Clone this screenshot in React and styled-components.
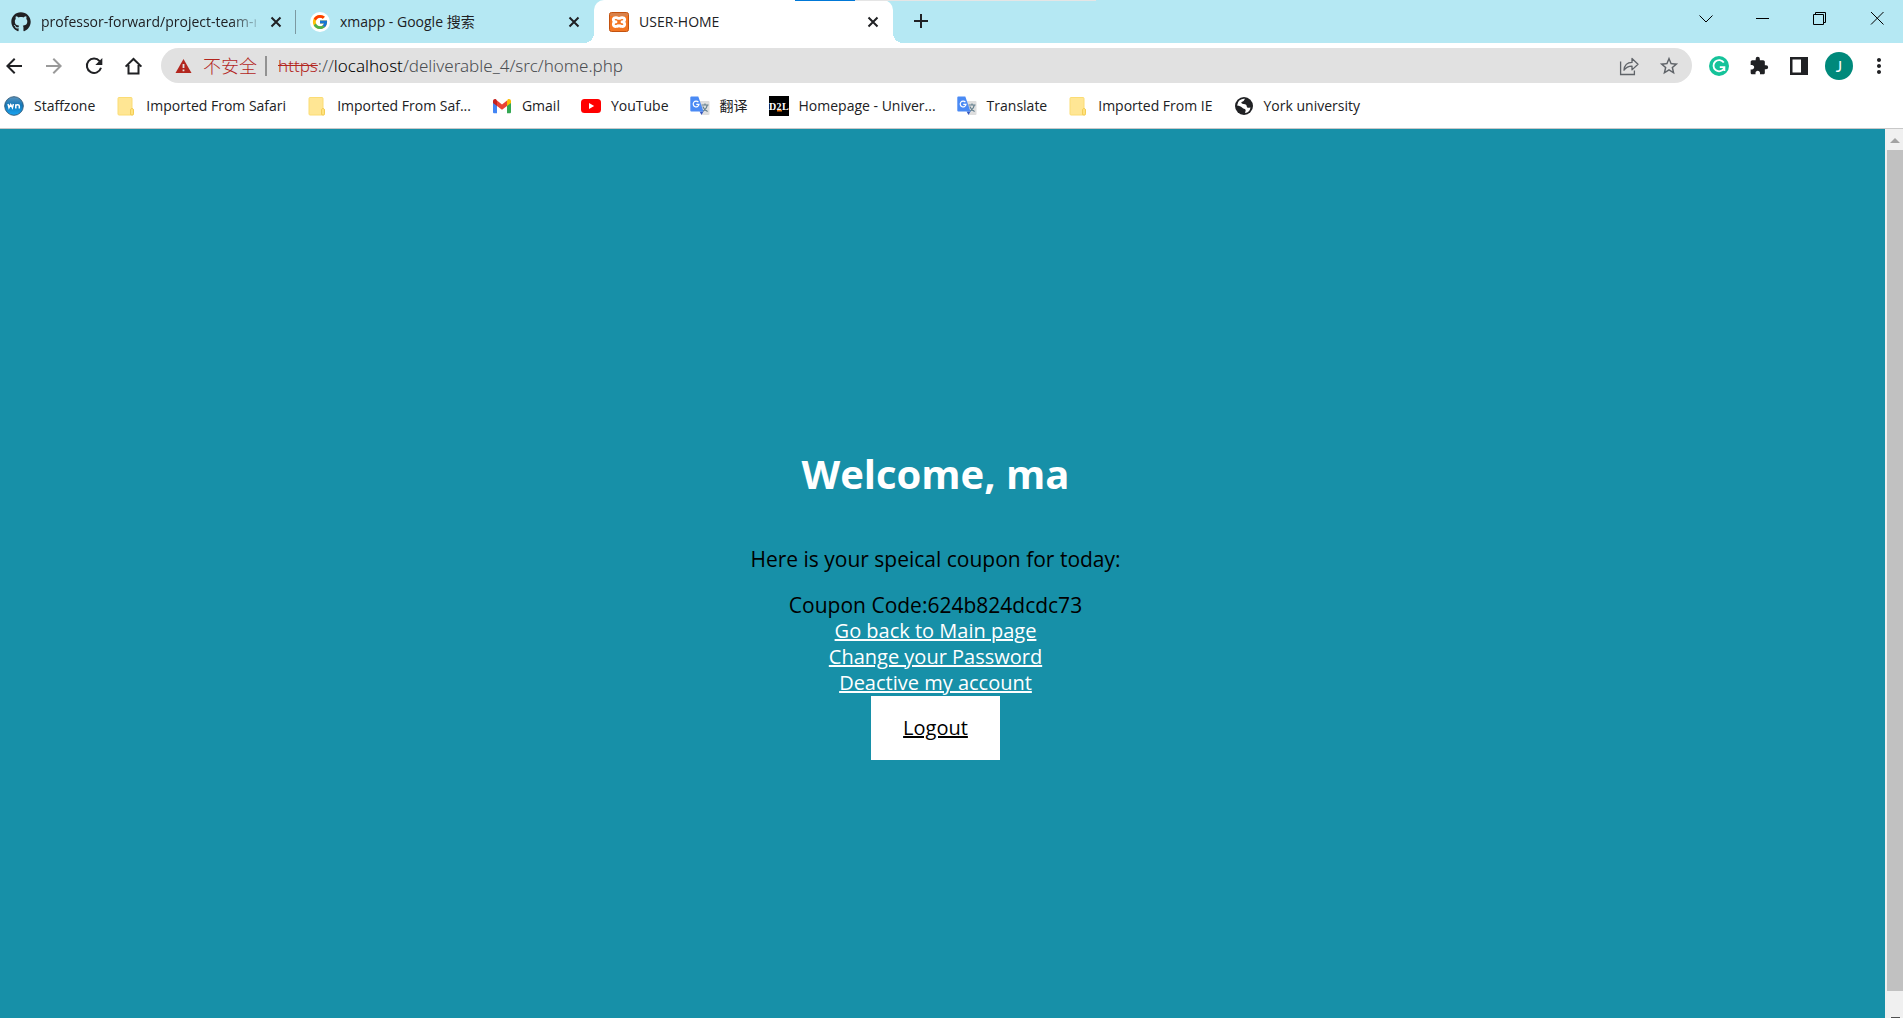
import React from "react";
import styled, { createGlobalStyle, css } from "styled-components";
import { FaGithub } from "react-icons/fa";
import { FcGoogle } from "react-icons/fc";
import { MdExtension, MdArrowBack, MdArrowForward, MdStarBorder, MdMoreVert } from "react-icons/md";

const GlobalStyle = createGlobalStyle`
  * { box-sizing: border-box; }
  body {
    margin: 0;
    font-family: "Open Sans", "Noto Sans CJK SC", sans-serif;
    font-size: 14px;
    line-height: 20px;
    color: #202124;
  }
  svg { display: block; flex: none; }
`;

const Window = styled.div`
  display: flex;
  flex-direction: column;
  height: 100vh;
  overflow: hidden;
  background: #fff;
`;

const TabStrip = styled.header`
  position: relative;
  display: flex;
  height: 43px;
  background: #b5e8f3;
`;

const LoadingBar = styled.div`
  position: absolute;
  top: 0;
  left: 795px;
  width: 301px;
  height: 1px;
  background: linear-gradient(to right, #0078d7 60px, #e5e5e5 60px);
`;

const flare = css`
  content: "";
  position: absolute;
  bottom: 0;
  width: 10px;
  height: 10px;
`;

const Tab = styled.div`
  position: relative;
  display: flex;
  align-items: center;
  gap: 10px;
  width: 299px;
  height: 43px;
  padding: 0 10px 0 15px;
  &:first-child { width: 295px; padding-left: 11px; padding-right: 9px; }
  ${(p) => p.$active && css`
    background: #fff;
    border-radius: 10px 10px 0 0;
    &::before { ${flare} left: -10px; background: radial-gradient(circle at 0 0, transparent 10px, #fff 10px); }
    &::after { ${flare} right: -10px; background: radial-gradient(circle at 100% 0, transparent 10px, #fff 10px); }
  `}
  ${(p) => p.$divider && css`
    &::after {
      content: "";
      position: absolute;
      right: -1px;
      top: 10px;
      width: 1px;
      height: 24px;
      background: #7c99a1;
    }
  `}
`;

const TabTitle = styled.span`
  flex: 1;
  overflow: hidden;
  white-space: nowrap;
  ${(p) => p.$fade && css`mask-image: linear-gradient(to right, #000 190px, transparent 222px);`}
`;

const IconButton = styled.button`
  display: flex;
  align-items: center;
  justify-content: center;
  flex: none;
  width: 20px;
  height: 20px;
  padding: 0;
  border: 0;
  background: none;
  color: ${(p) => p.$color || "#202124"};
`;

const NewTab = styled(IconButton)`
  margin: 11px 0 0 18px;
`;

const WindowControls = styled.div`
  display: flex;
  gap: 37px;
  margin: 8px 16px 0 auto;
`;

const Toolbar = styled.nav`
  display: flex;
  align-items: center;
  gap: 20px;
  height: 45px;
  padding: 0 14px 0 4px;
`;

const AddressBar = styled.div`
  display: flex;
  flex: 1;
  align-items: center;
  height: 35px;
  margin: 0 -3px;
  padding: 0 13px 0 14px;
  border-radius: 18px;
  background: #e1e1e1;
`;

const Warning = styled.span`
  margin: 0 11px 0 11px;
  padding-right: 8px;
  border-right: 2px solid #929292;
  font-size: 18px;
  font-weight: 300;
  color: #b3261e;
`;

const Address = styled.span`
  flex: 1;
  font-family: "Noto Sans", sans-serif;
  font-size: 17px;
  font-weight: 300;
  white-space: nowrap;
  color: #4b4e52;
  s { color: #b3261e; }
  b { font-weight: inherit; color: #000; }
`;

const AddressActions = styled.div`
  display: flex;
  gap: 20px;
`;

const Avatar = styled.button`
  width: 28px;
  height: 28px;
  margin: 0 -4px;
  padding: 0;
  border: 0;
  border-radius: 50%;
  background: #00897b;
  color: #fff;
  font: 400 15px/28px Lato, sans-serif;
`;

const Bookmarks = styled.nav`
  display: flex;
  gap: 21px;
  height: 41px;
  padding: 8px 4px 0;
  border-bottom: 1px solid #c8c8c8;
`;

const Bookmark = styled.a`
  display: flex;
  gap: 10px;
  height: 20px;
  color: #202124;
  text-decoration: none;
  white-space: nowrap;
`;

const Viewport = styled.div`
  display: flex;
  flex: 1;
  min-height: 0;
`;

const Page = styled.main`
  display: flex;
  flex: 1;
  flex-direction: column;
  align-items: center;
  padding: 319px 14px 0 0;
  background: #1790a8;
  font-size: 20px;
  line-height: 26px;
  color: #000;
`;

const Heading = styled.h1`
  margin: 0 0 46px;
  font-size: 40px;
  font-weight: 700;
  line-height: 52px;
  color: #fff;
`;

const Line = styled.p`
  margin: 0 0 20px;
  font-size: 21px;
`;

const Coupon = styled.p`
  margin: 0;
  font-size: 21px;
`;

const PageLink = styled.a`
  color: #fff;
  text-decoration-thickness: 2px;
`;

const Logout = styled.a`
  padding: 19px 32px;
  background: #fff;
  color: #000;
  text-decoration-thickness: 2px;
`;

const Scrollbar = styled.div`
  display: flex;
  flex-direction: column;
  align-items: flex-end;
  width: 18px;
  background: #f0f0f0;
`;

const ScrollEnd = styled.div`
  display: flex;
  justify-content: center;
  width: 16px;
  height: ${(p) => p.$height};
  padding-top: ${(p) => p.$top};
`;

const Thumb = styled.div`
  flex: 1;
  width: 16px;
  background: #c1c1c1;
`;

const ReloadIcon = () => (
  <svg width="20" height="20" viewBox="0 0 20 20" fill="none" stroke="#202124" strokeWidth="2">
    <path d="M15.6 5.1A7.2 7.2 0 1 0 17 11.8" />
    <path d="M18.3 2v7h-7z" fill="#202124" stroke="none" />
  </svg>
);

const HomeIcon = () => (
  <svg width="20" height="20" viewBox="0 0 20 20" fill="none" stroke="#202124" strokeWidth="2">
    <path d="M1.6 10.6L9.5 3l7.9 7.6M4.5 9v8.5h10V9" />
  </svg>
);

const WarningIcon = () => (
  <svg width="17" height="17" viewBox="0 0 17 17">
    <path d="M8.5 2L16.5 16H.5z" fill="#b3261e" />
    <path d="M7.6 7h1.8v4H7.6zM7.6 12.4h1.8v1.8H7.6z" fill="#e1e1e1" />
  </svg>
);

const ShareIcon = () => (
  <svg width="20" height="20" viewBox="0 0 20 20" fill="none" stroke="#5f6368" strokeWidth="1.3">
    <path d="M1.6 5.5v13h13.8v-4" />
    <path d="M5 14.2c.4-5 3-7.7 8-7.8V2.5l6 5.7-6 5.7v-3.8c-3.6 0-6 1.2-8 4.1z" strokeLinejoin="round" />
  </svg>
);

const GrammarlyIcon = () => (
  <svg width="20" height="20" viewBox="0 0 20 20">
    <circle cx="10" cy="10" r="10" fill="#15c39a" />
    <path d="M14.8 6.6A5.6 5.6 0 1 0 15 12.400M10.8 11.200h4.600v3.800" fill="none" stroke="#fff" strokeWidth="1.8" />
  </svg>
);

const PanelIcon = () => (
  <svg width="20" height="20" viewBox="0 0 20 20">
    <path d="M1 1h18v18H1zM3.500 3.500v13H12v-13z" fill="#202124" fillRule="evenodd" />
  </svg>
);

const XamppIcon = () => (
  <svg width="20" height="20" viewBox="0 0 20 20">
    <rect x=".5" y=".5" width="19" height="19" rx="2" fill="#f37623" stroke="#c35310" />
    <path d="M1 3a2 2 0 0 1 2-2h14a2 2 0 0 1 2 2v1H1z" fill="#d8814a" />
    <g fill="none" stroke="#fff" strokeWidth="2.8" strokeLinejoin="round">
      <path d="M10 7.500C9.500 5.300 4.300 4.500 4.300 7.600c0 1.500 1 2.300 2.700 2.300C5.300 9.900 4.300 10.900 4.300 12.300c0 3.200 5.200 2.500 5.700.3" />
      <path d="M10 7.500c.5-2.200 5.700-3 5.700.1 0 1.500-1 2.300-2.700 2.300 1.700 0 2.700 1 2.700 2.400 0 3.200-5.200 2.500-5.700.3" />
    </g>
  </svg>
);

const GoogleTabIcon = () => (
  <svg width="20" height="20" viewBox="0 0 20 20">
    <circle cx="10" cy="10" r="10" fill="#fff" />
    <g transform="translate(1.500 1.500)"><FcGoogle size={17} /></g>
  </svg>
);

const StaffzoneIcon = () => (
  <svg width="20" height="20" viewBox="0 0 20 20">
    <defs>
      <linearGradient id="ball" x2="0" y2="1">
        <stop offset="0" stopColor="#5b93bd" />
        <stop offset=".45" stopColor="#1277b8" />
        <stop offset="1" stopColor="#19a5f2" />
      </linearGradient>
    </defs>
    <circle cx="10" cy="10" r="9.3" fill="url(#ball)" stroke="#35607f" />
    <path d="M4 8l1 3.700 1.700-3.200 1.700 3.200 1-3.700M11.800 12.400V8.300M11.800 9.800c.6-1.400 3.500-1.400 3.500.3v2.300" fill="none" stroke="#fff" strokeWidth="1.500" />
  </svg>
);

const FolderIcon = () => (
  <svg width="20" height="20" viewBox="0 0 20 20">
    <path d="M3 1.500h12a1 1 0 0 1 1 1v10l1.500 1V18a1 1 0 0 1-1 1H3a1 1 0 0 1-1-1V2.500a1 1 0 0 1 1-1z" fill="#ffe694" stroke="#fbdc74" />
    <path d="M14.500 18.500v-4.500c0-2 3-2 3 0v3.500c0 1-.5 1.500-1.500 1.500z" fill="#ffe27d" stroke="#f0c64b" strokeWidth=".8" />
  </svg>
);

const GmailIcon = () => (
  <svg width="20" height="20" viewBox="0 0 20 20">
    <path d="M1 5v11c0 .8.500 1.300 1.300 1.300H5V9z" fill="#4285f4" />
    <path d="M15 9v8.300h2.700c.8 0 1.300-.5 1.300-1.300V5z" fill="#34a853" />
    <path d="M15 4.600V10l4-3V5c0-1.900-2-2.600-3.200-1.600z" fill="#fbbc04" />
    <path d="M5 10V4.600l5 3.800 5-3.800V10l-5 3.800z" fill="#ea4335" />
    <path d="M1 5v2l4 3V4.600l-.8-1.200C3 2.400 1 3.100 1 5z" fill="#c5221f" />
  </svg>
);

const YouTubeIcon = () => (
  <svg width="20" height="20" viewBox="0 0 20 20">
    <rect y="3" width="20" height="14" rx="3.500" fill="#f00" />
    <path d="M8 7v6l5.200-3z" fill="#fff" />
  </svg>
);

const TranslateIcon = () => (
  <svg width="20" height="20" viewBox="0 0 20 20">
    <path d="M8 5h10.500a1 1 0 0 1 1 1v12a1 1 0 0 1-1 1H12z" fill="#dedede" />
    <path d="M11.500 9h7M15 7.500V9M17.300 9c-.5 2.800-2.200 5-4.300 6.200M12.800 10.500c.8 2.200 2.500 4 4.800 5" fill="none" stroke="#607d8b" strokeWidth="1.100" />
    <path d="M9.500 15.500h4L11.500 19z" fill="#3557c0" />
    <path d="M1.300.5h7L13.500 15.500H1.300a1 1 0 0 1-1-1v-13a1 1 0 0 1 1-1z" fill="#4a8af4" />
    <path d="M8.400 6.200A2.900 2.900 0 1 0 9 8.300H6.300" fill="none" stroke="#fff" strokeWidth="1.200" />
  </svg>
);

const D2LIcon = () => (
  <svg width="20" height="20" viewBox="0 0 20 20" fontFamily="Liberation Serif, serif" fontWeight="700" fontSize="10" fill="#fff">
    <rect width="20" height="20" fill="#000" />
    <text x="0" y="13.500">D</text>
    <text x="7.500" y="13.500">2</text>
    <text x="13" y="13.500">L</text>
    <path d="M8 14h5v1.500H8z" fill="#e87511" />
  </svg>
);

const GlobeIcon = () => (
  <svg width="20" height="20" viewBox="0 0 20 20">
    <circle cx="10" cy="10" r="9" fill="#202124" />
    <path d="M11 2.800C9.800 4.800 9.600 5.600 7.500 6c-.5 1.200.3 1.800 2 2 2.500.2 3.200 1 3.300 2.500.1 1.700 1.500 1 3.700.9a6.900 6.900 0 0 1-5.300 5.700c-.4-1.300.9-2.100.3-3.400C11 12.600 9 12.800 8 11.500 7 10.200 5.200 9.600 3.100 9.400A7 7 0 0 1 11 2.800z" fill="#fff" />
  </svg>
);

const CONTROLS = [
  ["Search tabs", "M3.500 7.500l6.500 6.500 6.500-6.500"],
  ["Minimize", "M3 10.500h13"],
  ["Restore", "M3.500 6.500h10v10h-10zM5.500 6V4.500h10v10H14"],
  ["Close", "M4 4l12.500 12.500M16.500 4L4 16.500"],
];

const BOOKMARKS = [
  [StaffzoneIcon, "Staffzone"],
  [FolderIcon, "Imported From Safari"],
  [FolderIcon, "Imported From Saf..."],
  [GmailIcon, "Gmail"],
  [YouTubeIcon, "YouTube"],
  [TranslateIcon, "翻译"],
  [D2LIcon, "Homepage - Univer..."],
  [TranslateIcon, "Translate"],
  [FolderIcon, "Imported From IE"],
  [GlobeIcon, "York university"],
];

const CloseTab = () => (
  <IconButton aria-label="Close tab">
    <svg width="12" height="12" viewBox="0 0 12 12" stroke="#202124" strokeWidth="2">
      <path d="M1.500 1.500l9 9M10.500 1.500l-9 9" />
    </svg>
  </IconButton>
);

export default function App() {
  return (
    <Window>
      <GlobalStyle />
      <TabStrip>
        <Tab $divider>
          <FaGithub size={20} />
          <TabTitle $fade>professor-forward/project-team-n</TabTitle>
          <CloseTab />
        </Tab>
        <Tab>
          <GoogleTabIcon />
          <TabTitle>xmapp - Google 搜索</TabTitle>
          <CloseTab />
        </Tab>
        <Tab $active>
          <XamppIcon />
          <TabTitle>USER-HOME</TabTitle>
          <CloseTab />
        </Tab>
        <NewTab aria-label="New tab">
          <svg width="16" height="16" viewBox="0 0 16 16" stroke="#202124" strokeWidth="2">
            <path d="M8 1v14M1 8h14" />
          </svg>
        </NewTab>
        <WindowControls>
          {CONTROLS.map(([label, d]) => (
            <IconButton key={label} aria-label={label}>
              <svg width="20" height="20" viewBox="0 0 20 20" fill="none" stroke="#000">
                <path d={d} />
              </svg>
            </IconButton>
          ))}
        </WindowControls>
        <LoadingBar />
      </TabStrip>
      <Toolbar>
        <IconButton aria-label="Back"><MdArrowBack size={24} /></IconButton>
        <IconButton aria-label="Forward" $color="#9a9a9a"><MdArrowForward size={24} /></IconButton>
        <IconButton aria-label="Reload"><ReloadIcon /></IconButton>
        <IconButton aria-label="Home"><HomeIcon /></IconButton>
        <AddressBar>
          <WarningIcon />
          <Warning>不安全</Warning>
          <Address><s>https</s>://<b>localhost</b>/deliverable_4/src/home.php</Address>
          <AddressActions>
            <IconButton aria-label="Share"><ShareIcon /></IconButton>
            <IconButton aria-label="Bookmark this page" $color="#5f6368"><MdStarBorder size={22} /></IconButton>
          </AddressActions>
        </AddressBar>
        <IconButton aria-label="Grammarly"><GrammarlyIcon /></IconButton>
        <IconButton aria-label="Extensions"><MdExtension size={20} /></IconButton>
        <IconButton aria-label="Side panel"><PanelIcon /></IconButton>
        <Avatar>J</Avatar>
        <IconButton aria-label="Menu"><MdMoreVert size={24} /></IconButton>
      </Toolbar>
      <Bookmarks>
        {BOOKMARKS.map(([Icon, label]) => (
          <Bookmark href="#" key={label}>
            <Icon />
            {label}
          </Bookmark>
        ))}
      </Bookmarks>
      <Viewport>
        <Page>
          <Heading>Welcome, ma</Heading>
          <Line>Here is your speical coupon for today:</Line>
          <Coupon>Coupon Code:624b824dcdc73</Coupon>
          <PageLink href="#">Go back to Main page</PageLink>
          <PageLink href="#">Change your Password</PageLink>
          <PageLink href="#">Deactive my account</PageLink>
          <Logout href="#">Logout</Logout>
        </Page>
        <Scrollbar>
          <ScrollEnd $height="21px" $top="9px">
            <svg width="10" height="5" viewBox="0 0 10 5"><path d="M0 5l5-5 5 5z" fill="#a3a3a3" /></svg>
          </ScrollEnd>
          <Thumb />
          <ScrollEnd $height="27px" $top="26px">
            <svg width="9" height="5" viewBox="0 0 9 5"><path d="M0 0h9v.9L4.500 5 0 .9z" fill="#505050" /></svg>
          </ScrollEnd>
        </Scrollbar>
      </Viewport>
    </Window>
  );
}
